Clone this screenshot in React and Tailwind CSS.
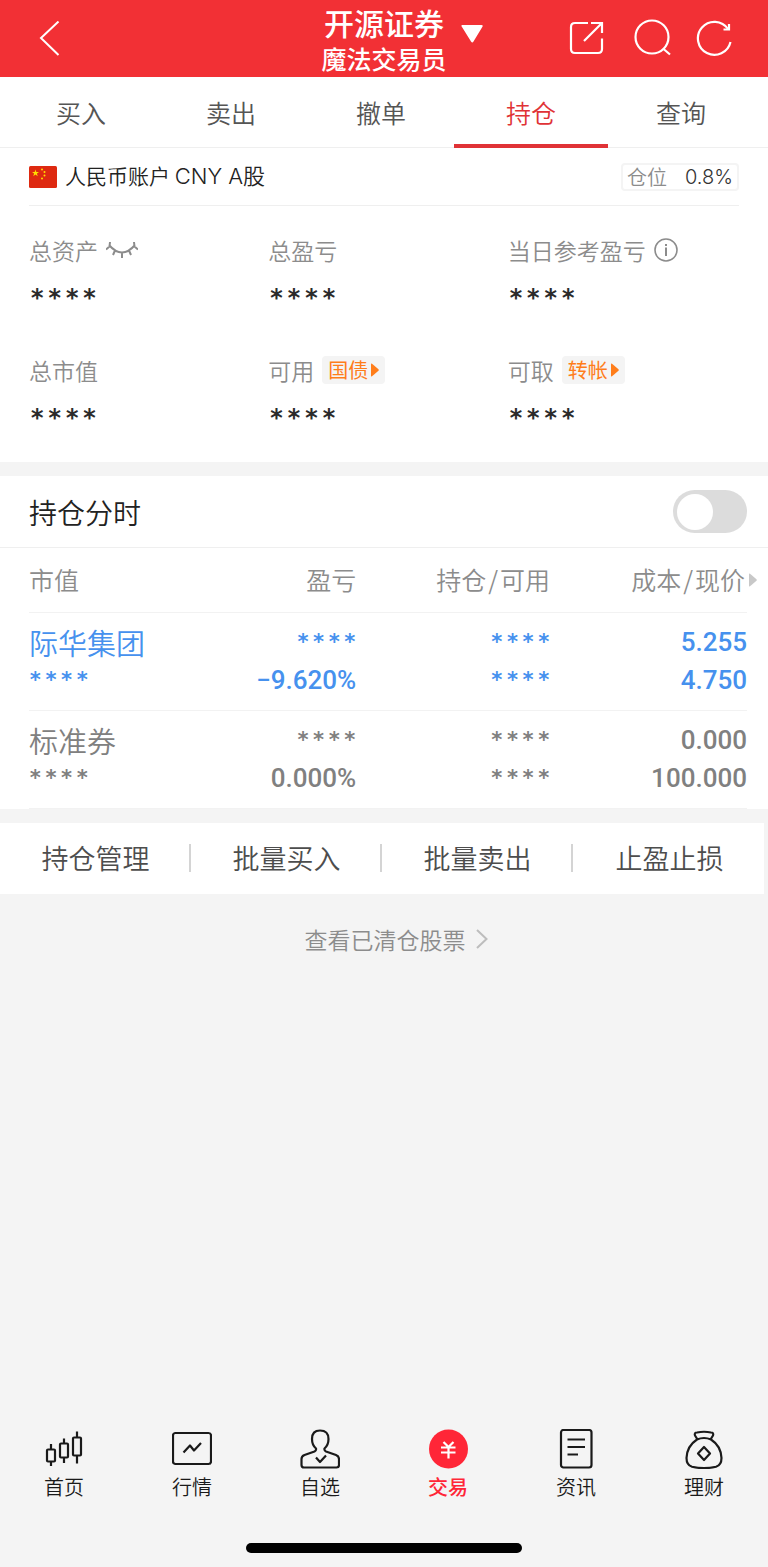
import { useState } from 'react'

const tabs = ['买入', '卖出', '撤单', '持仓', '查询']

const holdings = [
  { name: '际华集团', ratio: '−9.620%', cost: '5.255', price: '4.750', color: 'text-[#4691ee]' },
  { name: '标准券', ratio: '0.000%', cost: '0.000', price: '100.000', color: 'text-[#808080]' }
]

const actions = ['持仓管理', '批量买入', '批量卖出', '止盈止损']

function Header() {
  return (
    <header className="relative flex h-[77px] items-center justify-between bg-[#f23035] pl-9 pr-8 text-white">
      <button type="button" aria-label="返回">
        <svg className="h-9 w-7" viewBox="0 0 28 36" fill="none" stroke="currentColor" strokeWidth="2">
          <path d="M22.500 0.500 5 17 22.500 34" />
        </svg>
      </button>
      <button
        type="button"
        className="absolute left-1/2 top-0 flex h-full -translate-x-1/2 items-start pt-2"
        aria-label="切换账户"
      >
        <span className="block text-center font-['Inter','Noto_Sans_CJK_SC',sans-serif] font-medium">
          <span className="block text-[30px] leading-8">开源证券</span>
          <span className="block text-[25px] leading-10">魔法交易员</span>
        </span>
        <svg className="absolute left-full top-6 ml-3.5 h-5 w-6" viewBox="0 0 24 20" fill="currentColor">
          <path d="M1.500 3Q0 1 2 1H21Q23 1 21.800 3L13 17.500Q11.800 19.500 10.500 17.500Z" />
        </svg>
      </button>
      <div className="flex items-center gap-6">
        <button type="button" aria-label="分享">
          <svg className="h-10 w-10" viewBox="0 0 40 40" fill="none" stroke="currentColor" strokeWidth="2.200">
            <path d="M20 4H7Q3 4 3 8V30Q3 34 7 34H30Q34 34 34 30V19.500" />
            <path d="M23 4H34V14M34 4 16 22" />
          </svg>
        </button>
        <button type="button" aria-label="搜索">
          <svg className="h-10 w-10" viewBox="0 0 40 40" fill="none" stroke="currentColor" strokeWidth="2.200">
            <circle cx="20" cy="18" r="16.500" />
            <path d="M31 29.500 38 35.500" />
          </svg>
        </button>
        <button type="button" aria-label="刷新">
          <svg className="h-10 w-10" viewBox="0 0 40 40" fill="none" stroke="currentColor" strokeWidth="2.200">
            <path d="M34.500 23A16.500 16.500 0 1 1 32 10" />
            <path d="M33 5V10.500H27.500" />
          </svg>
        </button>
      </div>
    </header>
  )
}

function Tabs({ active, onChange }) {
  return (
    <nav className="flex h-[71px] border-b border-[#efefef] bg-white pl-1.5 pr-3">
      {tabs.map((tab) => (
        <button
          key={tab}
          type="button"
          onClick={() => onChange(tab)}
          className={`relative flex-1 pt-0.5 text-[25px] ${tab === active ? 'text-[#e03236]' : 'text-[#555]'}`}
        >
          {tab}
          {tab === active && <span className="absolute -inset-x-0.5 -bottom-px h-1 bg-[#e03236]" />}
        </button>
      ))}
    </nav>
  )
}

function Flag() {
  return (
    <svg className="h-[22px] w-7" viewBox="0 0 28 22">
      <rect width="28" height="22" rx="1.500" fill="#de2910" />
      <g fill="#ffde00">
        <path d="M6.500 3.500 7.300 6H10L7.900 7.600 8.700 10.200 6.500 8.600 4.300 10.200 5.100 7.600 3 6H5.700Z" />
        <circle cx="13" cy="3.500" r="1" />
        <circle cx="15.500" cy="6" r="1" />
        <circle cx="15.500" cy="9.500" r="1" />
        <circle cx="13" cy="12.500" r="1" />
      </g>
    </svg>
  )
}

function Arrow({ className }) {
  return (
    <svg className={className} viewBox="0 0 8 14" fill="currentColor">
      <path d="M0 1.200Q0 0 1 .8L7.500 6.200Q8 7 7.500 7.800L1 13.200Q0 14 0 12.800Z" />
    </svg>
  )
}

// hidden amount, one star per slot
function Masked({ className }) {
  return (
    <span className={`flex gap-[3px] font-['DejaVu_Sans_Mono',monospace] font-bold ${className}`}>
      {[0, 1, 2, 3].map((i) => (
        <span key={i}>*</span>
      ))}
    </span>
  )
}

function Stat({ label, children }) {
  return (
    <div>
      <dt className="flex h-8 items-center gap-2 text-[23px] text-[#8c8c8c]">
        <span>{label}</span>
        {children}
      </dt>
      <dd className="pt-3.5">
        <Masked className="pl-px text-[24px] leading-9 text-[#2b2b2b]" />
      </dd>
    </div>
  )
}

function TagButton({ children }) {
  return (
    <button
      type="button"
      className="flex h-7 items-center gap-[3px] rounded bg-[#f4f4f4] px-1.5 text-[20px] font-normal text-[#ff7d1a]"
    >
      {children}
      <Arrow className="h-3.5 w-2" />
    </button>
  )
}

function Account() {
  return (
    <section className="bg-white pb-[26px]">
      <div className="mx-[29px] flex h-[58px] items-center border-b border-[#efefef]">
        <Flag />
        <h2 className="pl-2 text-[21px] text-[#222]">
          人民币账户 <span className="font-['Inter','Noto_Sans_CJK_SC',sans-serif] text-[22px]">CNY A股</span>
        </h2>
        <div className="ml-auto flex h-7 items-center gap-[18px] rounded border-2 border-[#f4f4f4] px-1 text-[20px]">
          <span className="text-[#8c8c8c]">仓位</span>
          <span className="font-['Inter',sans-serif] text-[#333]">0.8%</span>
        </div>
      </div>
      <dl className="grid grid-cols-3 gap-y-[38px] pl-[29px] pr-[21px] pt-7">
        <Stat label="总资产">
          <button type="button" aria-label="显示金额">
            <svg className="h-5 w-8" viewBox="0 0 32 20" fill="none" stroke="currentColor" strokeWidth="2">
              <path d="M3 5Q16 20 29 5M4 2 3.500 6.500 0 9.500M28 2 28.500 6.500 32 9.500M9 10.500 7 15M16 12.500V18M23 10.500 25 15" />
            </svg>
          </button>
        </Stat>
        <Stat label="总盈亏" />
        <Stat label="当日参考盈亏">
          <button type="button" aria-label="说明">
            <svg className="h-6 w-6" viewBox="0 0 24 24" fill="none" stroke="currentColor" strokeWidth="1.600">
              <circle cx="12" cy="12" r="11" />
              <path d="M12 9.500V18M12 6V8" strokeWidth="2" />
            </svg>
          </button>
        </Stat>
        <Stat label="总市值" />
        <Stat label="可用">
          <TagButton>国债</TagButton>
        </Stat>
        <Stat label="可取">
          <TagButton>转帐</TagButton>
        </Stat>
      </dl>
    </section>
  )
}

function Pair({ first, second }) {
  return (
    <span>
      {first}
      <span className="mx-0.5">/</span>
      {second}
    </span>
  )
}

function Holdings() {
  const stars = 'text-[21px]'
  const starsRight = 'justify-end text-[21px]'

  return (
    <table className="ml-[29px] mr-[21px] w-[calc(100%-50px)] table-fixed">
      <colgroup>
        <col className="w-[22%]" />
        <col className="w-[24%]" />
        <col className="w-[27%]" />
        <col className="w-[27%]" />
      </colgroup>
      <thead>
        <tr className="h-16 border-b border-[#f2f2f2] text-right text-[25px] text-[#8c8c8c]">
          <th scope="col" className="text-left font-[350]">市值</th>
          <th scope="col" className="pr-[3px] font-[350]">盈亏</th>
          <th scope="col" className="pr-[3px] font-[350]"><Pair first="持仓" second="可用" /></th>
          <th scope="col" className="relative pr-0.5 font-[350]">
            <Pair first="成本" second="现价" />
            <Arrow className="absolute left-full top-1/2 ml-0.5 h-3.5 w-2 -translate-y-1/2 text-[#c8c8c8]" />
          </th>
        </tr>
      </thead>
      <tbody>
        {holdings.map((item) => (
          <tr
            key={item.name}
            className={`h-[98px] border-b border-[#f2f2f2] text-right font-['Roboto',sans-serif] text-[26px] font-medium leading-[38px] ${item.color}`}
          >
            <td className="text-left">
              <span className="block font-['Noto_Sans_CJK_SC',sans-serif] text-[29px] font-[350]">{item.name}</span>
              <Masked className={stars} />
            </td>
            <td className="pr-[3px]">
              <Masked className={starsRight} />
              <span className="block">{item.ratio}</span>
            </td>
            <td className="pr-[3px]">
              <Masked className={starsRight} />
              <Masked className={starsRight} />
            </td>
            <td>
              <span className="block">{item.cost}</span>
              <span className="block">{item.price}</span>
            </td>
          </tr>
        ))}
      </tbody>
    </table>
  )
}

function CandlesIcon() {
  return (
    <>
      <rect x="3" y="20.500" width="8" height="12" rx="1" />
      <rect x="16" y="14.500" width="8" height="14" rx="1" />
      <rect x="29" y="8.500" width="8" height="18" rx="1" />
      <path d="M7 15V20.500M7 32.500V37M20 9.500V14.500M20 28.500V34M33 2.500V8.500M33 26.500V34.500" />
    </>
  )
}

function QuotesIcon() {
  return (
    <>
      <rect x="1" y="4" width="38" height="31" rx="2.500" />
      <path d="M11.500 23.500 18 16.500 22 21.500 29 14" />
    </>
  )
}

function PersonIcon() {
  return (
    <>
      <path d="M16 19.500Q12 16 12 10Q12 1.500 20 1.500Q28.500 1.500 28.500 10Q28.500 16 24.500 19.500Q24 21.500 26 22.500L36 26Q39 27.200 39 30V36Q39 38.500 36.500 38.500H4Q1.500 38.500 1.500 36V30Q1.500 27.200 4.500 26L14.500 22.500Q16.500 21.500 16 19.500Z" />
      <path d="M16 28.500 20 33 26 26.500" />
    </>
  )
}

function TradeIcon() {
  return (
    <>
      <circle cx="20.500" cy="20" r="19.500" fill="#ff2637" stroke="none" />
      <path d="M15.500 13 20.500 18 25.500 13M13 18.500H27.500M13 23.500H27.500M20.500 18V29.500" stroke="#fff" strokeWidth="2.200" />
    </>
  )
}

function NewsIcon() {
  return (
    <>
      <rect x="5" y="1" width="30.500" height="37.500" rx="2.500" />
      <path d="M11.500 10.500H29M11.500 18H29M11.500 25.500H22" />
    </>
  )
}

function BagIcon() {
  return (
    <>
      <path d="M13.500 10.500 11 6.500Q10 3.500 13 3.500Q20 2 27 3.500Q30 3.500 29 6.500L26.500 10.500" />
      <path d="M13 10.500Q20 7.500 27 10.500Q37 17 37.500 29Q37.500 36 32 37.800Q20 40.500 8 37.800Q2.500 36 2.500 29Q3 17 13 10.500Z" />
      <path d="M20 18 26 24.500 20 31 14 24.500Z" />
    </>
  )
}

const navItems = [
  { label: '首页', Icon: CandlesIcon },
  { label: '行情', Icon: QuotesIcon },
  { label: '自选', Icon: PersonIcon },
  { label: '交易', Icon: TradeIcon, active: true },
  { label: '资讯', Icon: NewsIcon },
  { label: '理财', Icon: BagIcon }
]

function BottomNav() {
  return (
    <footer className="pb-3.5">
      <nav className="grid grid-cols-6 pb-[42px]">
        {navItems.map(({ label, Icon, active }) => (
          <a
            key={label}
            href="#"
            className={`flex flex-col items-center gap-1 text-[20px] leading-7 ${active ? 'font-medium text-[#ff2637]' : 'text-[#1a1a1a]'}`}
          >
            <svg className="h-10 w-10" viewBox="0 0 40 40" fill="none" stroke="currentColor" strokeWidth="2.200" strokeLinejoin="round">
              <Icon />
            </svg>
            {label}
          </a>
        ))}
      </nav>
      <div className="mx-auto h-2.5 w-[36%] rounded-full bg-black" />
    </footer>
  )
}

function App() {
  const [activeTab, setActiveTab] = useState('持仓')
  const [showChart, setShowChart] = useState(false)

  return (
    <div className="flex min-h-screen flex-col bg-[#f4f4f4] font-['Noto_Sans_CJK_SC',sans-serif] font-[350]">
      <Header />
      <Tabs active={activeTab} onChange={setActiveTab} />
      <main className="flex-1">
        <Account />

        <section className="mt-3.5 bg-white">
          <label className="flex h-[72px] items-center justify-between border-b border-[#efefef] pl-[29px] pr-[21px] text-[28px] text-[#222]">
            持仓分时
            <input
              type="checkbox"
              role="switch"
              checked={showChart}
              onChange={(e) => setShowChart(e.target.checked)}
              className="flex h-[43px] w-[74px] appearance-none items-center rounded-full bg-[#dcdcdc] px-1 before:block before:h-9 before:w-9 before:rounded-full before:bg-white checked:justify-end checked:bg-[#f23035]"
            />
          </label>
          <Holdings />
        </section>

        <div className="mr-1 mt-3.5 grid h-[71px] grid-cols-4 items-center divide-x-2 divide-[#d4d4d4] bg-white">
          {actions.map((action) => (
            <button key={action} type="button" className="h-7 pl-0.5 text-[27px] leading-7 text-[#4d4d4d]">
              {action}
            </button>
          ))}
        </div>

        <a href="#" className="flex items-center justify-center gap-2.5 pl-6 pt-7 text-[23px] text-[#8c8c8c]">
          查看已清仓股票
          <svg className="h-5 w-3" viewBox="0 0 12 20" fill="none" stroke="#bdbdbd" strokeWidth="2">
            <path d="M1 1 10.500 10 1 19" />
          </svg>
        </a>
      </main>
      <BottomNav />
    </div>
  )
}

export default App
